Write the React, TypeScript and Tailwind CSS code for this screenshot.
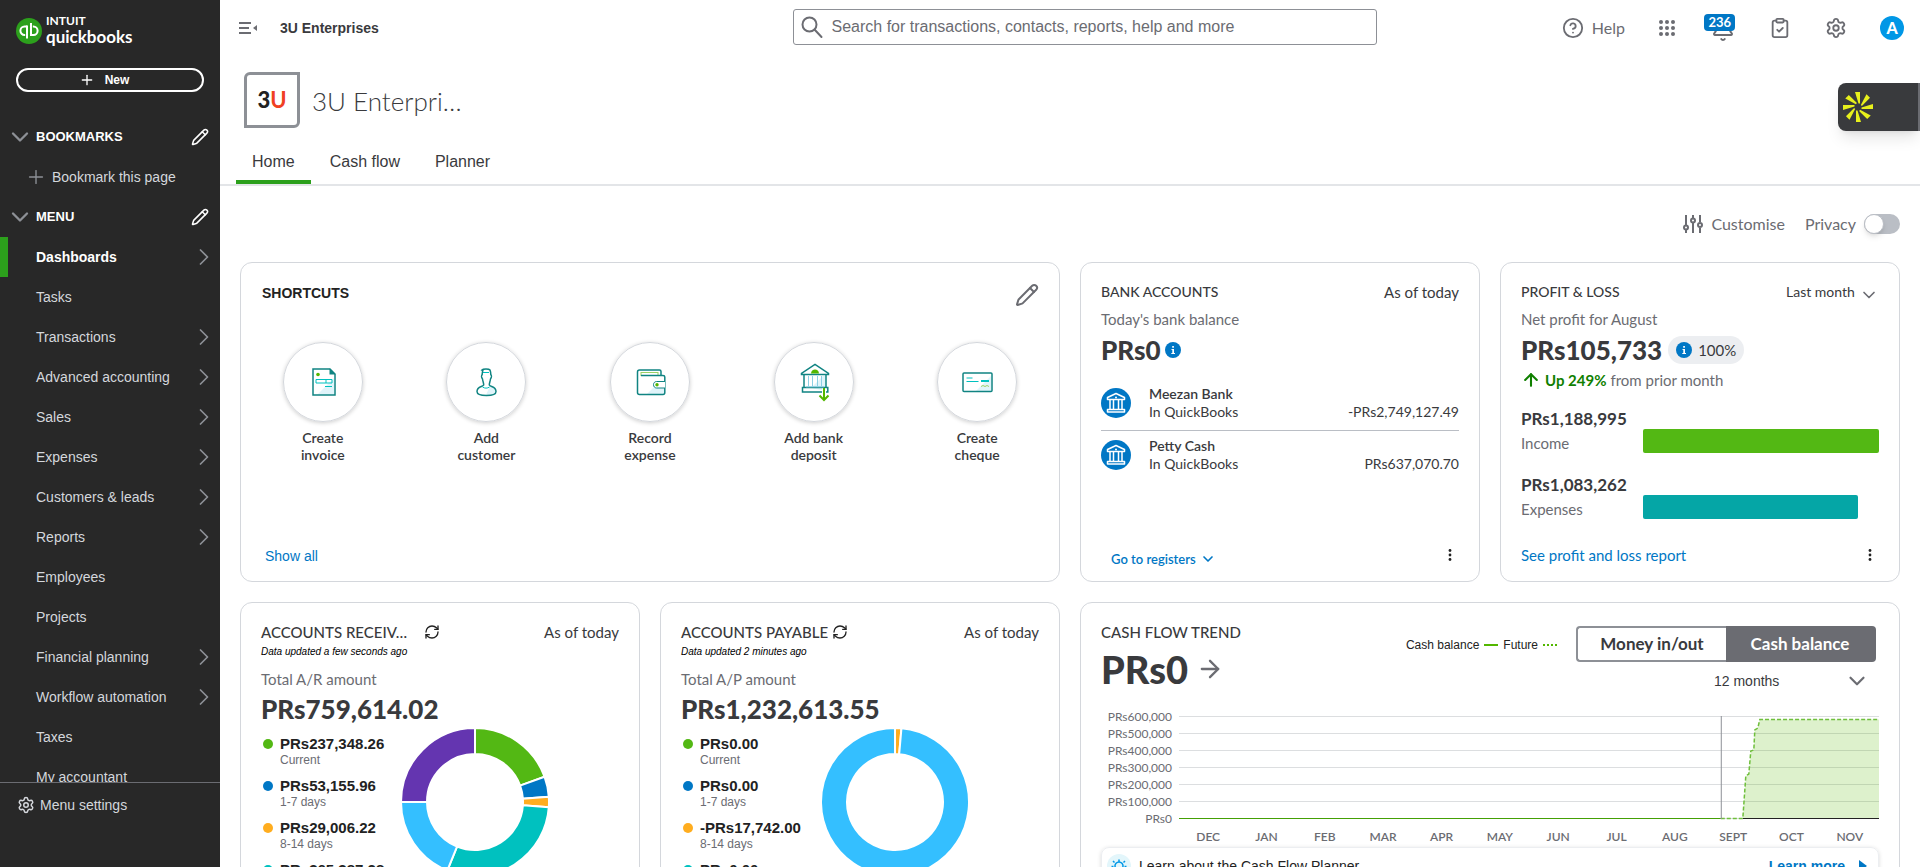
import { useState } from "react";
import clsx from "clsx";
import {
  ArrowRight,
  ArrowUp,
  Bell,
  ChevronDown,
  ChevronRight,
  CircleHelp,
  ClipboardCheck,
  Pencil,
  Plus,
  RefreshCw,
  Settings,
} from "lucide-react";

const menu = [
  { label: "Dashboards", sub: true, active: true },
  { label: "Tasks" },
  { label: "Transactions", sub: true },
  { label: "Advanced accounting", sub: true },
  { label: "Sales", sub: true },
  { label: "Expenses", sub: true },
  { label: "Customers & leads", sub: true },
  { label: "Reports", sub: true },
  { label: "Employees" },
  { label: "Projects" },
  { label: "Financial planning", sub: true },
  { label: "Workflow automation", sub: true },
  { label: "Taxes" },
  { label: "My accountant" },
];

const months = ["DEC", "JAN", "FEB", "MAR", "APR", "MAY", "JUN", "JUL", "AUG", "SEPT", "OCT", "NOV"];

const ticks = ["PRs600,000", "PRs500,000", "PRs400,000", "PRs300,000", "PRs200,000", "PRs100,000", "PRs0"];

type Aging = { amount: string; label: string; color: string };
type Slice = { from: number; to: number; color: string };

const receivable: Aging[] = [
  { amount: "PRs237,348.26", label: "Current", color: "bg-[#53b814]" },
  { amount: "PRs53,155.96", label: "1-7 days", color: "bg-[#0077c5]" },
  { amount: "PRs29,006.22", label: "8-14 days", color: "bg-[#ffad1f]" },
  { amount: "PRs365,387.28", label: "15-21 days", color: "bg-[#00c1bf]" },
];

const payable: Aging[] = [
  { amount: "PRs0.00", label: "Current", color: "bg-[#53b814]" },
  { amount: "PRs0.00", label: "1-7 days", color: "bg-[#0077c5]" },
  { amount: "-PRs17,742.00", label: "8-14 days", color: "bg-[#ffad1f]" },
  { amount: "PRs0.00", label: "15-21 days", color: "bg-[#00c1bf]" },
];

const receivableSlices: Slice[] = [
  { from: 0, to: 70, color: "#53b814" },
  { from: 70, to: 86, color: "#0077c5" },
  { from: 86, to: 94, color: "#ffad1f" },
  { from: 94, to: 202, color: "#00c1bf" },
  { from: 202, to: 270, color: "#34bfff" },
  { from: 270, to: 360, color: "#6435b0" },
];

const payableSlices: Slice[] = [
  { from: 0, to: 5, color: "#ffad1f" },
  { from: 5, to: 360, color: "#34bfff" },
];

function QbMark() {
  return (
    <svg className="size-[26px]" viewBox="0 0 26 26" fill="none">
      <circle cx="13" cy="13" r="13" fill="#2ca01c" />
      <g stroke="#fff" strokeWidth="2">
        <path d="M11 8.5H8.6a4.2 4.2 0 0 0 0 8.4h.6" />
        <path d="M11 7.5v13" />
        <path d="M15 17h2.4a4.2 4.2 0 0 0 0-8.4h-.6" />
        <path d="M15 5v13" />
      </g>
    </svg>
  );
}

function InvoiceIcon() {
  return (
    <svg className="size-10" viewBox="0 0 40 40" fill="none">
      <path d="M14 33 31 16v17z" fill="#e0f4fa" />
      <path d="M10 7h17l5 5v21H10z" stroke="#108482" strokeWidth="1.5" />
      <path d="M26.500 6.500v6h6z" fill="#108482" />
      <circle cx="15" cy="12.500" r="1.800" fill="#53b700" />
      <path d="M13 17.500h16v3.500H13zM23 17.500V21M22 24.500h7" stroke="#00c1bf" />
    </svg>
  );
}

function CustomerIcon() {
  return (
    <svg className="size-10" viewBox="0 0 40 40" fill="none">
      <path d="M20 33c6 0 9-1.500 9-4s-2-4-5-5z" fill="#e0f4fa" />
      <path
        d="M16 8c1-1.500 7-1.500 8 0 .6 1.500.8 3 .8 4.500.8.800 1 3-.3 4.500-.4 2.500-1.200 4-1.200 6 1 2 6.700 1.500 6.700 6.500 0 2.500-4 4-9.500 4s-9.500-1.500-9.500-4c0-5 5.700-4.500 6.700-6.500 0-2-.8-3.500-1.200-6-1.300-1.500-1.100-3.700-.3-4.500 0-1.500.2-3 .8-4.500z"
        stroke="#108482"
        strokeWidth="1.500"
      />
      <path d="M17 10.500h6M16.500 25c2 1.500 5 1.500 7 0" stroke="#00c1bf" />
    </svg>
  );
}

function WalletIcon() {
  return (
    <svg className="size-10" viewBox="0 0 40 40" fill="none">
      <path d="M17 32l7-7h10v7z" fill="#e0f4fa" />
      <rect x="11" y="10.500" width="17" height="3" stroke="#9bd165" />
      <path
        d="M31 13V9.500c0-.8-.6-1.500-1.500-1.500h-20C8.200 8 7.500 8.700 7.500 10v20.500c0 1.200.8 2 2 2H33c1.200 0 1.800-.8 1.800-2V15c0-1.200-.6-1.600-1.800-1.600H11"
        stroke="#108482"
        strokeWidth="1.500"
      />
      <path d="M35 19.500h-8.500c-1.800 0-3 1.500-3 3.200s1.200 3.300 3 3.300H35" stroke="#108482" fill="#fff" />
      <circle cx="27" cy="22.800" r="1.700" fill="#53b700" />
    </svg>
  );
}

function DepositIcon() {
  return (
    <svg className="size-10 overflow-visible" viewBox="0 0 40 40" fill="none">
      <path d="M17 26l12-12h3v15z" fill="#e0f4fa" />
      <path d="M7.500 12.500v-1L21 2.500l13.500 9v1zM10 13v12M32 13v12M8.500 30v-4.500h25.300V30z" stroke="#108482" strokeWidth="1.500" />
      <path d="M14.500 14v10.500M18.500 14v10.500M23.500 14v10.500M27.500 14v10.500M12 24.800h18" stroke="#8ccfe4" />
      <path d="M17 11.500c0-5.300 8-5.300 8 0z" fill="#53b700" />
      <path d="M30 26.500v12M25.500 34l4.500 4.500 4.500-4.500" stroke="#fff" strokeWidth="4" />
      <path d="M30 26v12M25.500 33.500l4.500 4.500 4.500-4.500" stroke="#53b700" strokeWidth="2" />
    </svg>
  );
}

function ChequeIcon() {
  return (
    <svg className="size-10" viewBox="0 0 40 40" fill="none">
      <path d="M19 29l15-15v15z" fill="#e0f4fa" />
      <rect x="6" y="11" width="29" height="18.500" rx="1" stroke="#108482" strokeWidth="1.500" />
      <path d="M9.500 16h6M9.500 19.500h12" stroke="#00c1bf" />
      <path d="M24 19h8" stroke="#00c1bf" strokeWidth="2" />
      <path d="M24 24.500l2-1 2 1 2-1 2 1" stroke="#9bd165" />
    </svg>
  );
}

const shortcuts = [
  { label: "Create invoice", icon: <InvoiceIcon /> },
  { label: "Add customer", icon: <CustomerIcon /> },
  { label: "Record expense", icon: <WalletIcon /> },
  { label: "Add bank deposit", icon: <DepositIcon /> },
  { label: "Create cheque", icon: <ChequeIcon /> },
];

function BankIcon() {
  return (
    <svg className="size-[30px] shrink-0" viewBox="0 0 30 30" fill="none">
      <circle cx="15" cy="15" r="15" fill="#0077c5" />
      <path
        d="M6.500 11.500v-2L15 5.500l8.500 4v2zM9 12v9M12.500 12v9M17.500 12v9M21 12v9M6.500 21.500h17v2.500h-17z"
        stroke="#fff"
        strokeWidth="1.500"
        strokeLinejoin="round"
      />
      <circle cx="15" cy="9.500" r="1" fill="#fff" />
    </svg>
  );
}

function InfoIcon() {
  return (
    <svg className="size-4" viewBox="0 0 16 16">
      <circle cx="8" cy="8" r="8" fill="#0077c5" />
      <path d="M6.500 7H9v4h1v1H6.300v-1h1V8h-.8zM7.200 4h1.700v1.700H7.200z" fill="#fff" />
    </svg>
  );
}

function SearchIcon() {
  return (
    <svg className="size-6" viewBox="0 0 24 24" fill="none" stroke="#6b6c72" strokeWidth="2">
      <circle cx="9.500" cy="9.500" r="7" />
      <path d="M14.500 14.500 21.500 22" strokeLinecap="round" />
    </svg>
  );
}

function SlidersIcon() {
  return (
    <svg className="size-5" viewBox="0 0 20 20" fill="none" stroke="#6b6c72" strokeWidth="2">
      <path d="M3 1v10M3 16v3M10 1v3M10 9v10M17 1v7M17 14v5" />
      <circle cx="3" cy="13.500" r="2" />
      <circle cx="10" cy="6.500" r="2" />
      <circle cx="17" cy="11" r="2" />
    </svg>
  );
}

function KebabButton({ label }: { label: string }) {
  return (
    <button aria-label={label} className="flex h-5 w-[18px] items-center justify-center">
      <svg className="h-3 w-1" viewBox="0 0 4 12" fill="#222">
        <circle cx="2" cy="1.500" r="1.400" />
        <circle cx="2" cy="6" r="1.400" />
        <circle cx="2" cy="10.500" r="1.400" />
      </svg>
    </button>
  );
}

function point(angle: number, r: number) {
  const rad = ((angle - 90) * Math.PI) / 180;
  return `${74 + r * Math.cos(rad)} ${74 + r * Math.sin(rad)}`;
}

function Donut({ slices }: { slices: Slice[] }) {
  return (
    <svg className="mt-px size-[148px] shrink-0" viewBox="0 0 148 148">
      {slices.map(({ from, to, color }) => {
        const large = to - from > 180 ? 1 : 0;
        return (
          <path
            key={from}
            d={`M${point(from, 74)}A74 74 0 ${large} 1 ${point(to, 74)}L${point(to, 48)}A48 48 0 ${large} 0 ${point(from, 48)}Z`}
            fill={color}
            stroke="#fff"
            strokeWidth="2"
          />
        );
      })}
    </svg>
  );
}

function Card({ className, children }: { className?: string; children: React.ReactNode }) {
  return (
    <section className={clsx("flex flex-col rounded-xl border border-[#d4d7dc] bg-white px-5 pt-5", className)}>
      {children}
    </section>
  );
}

function Sidebar() {
  return (
    <aside className="flex w-[220px] shrink-0 flex-col bg-[#282828] font-['Liberation_Sans',sans-serif] text-sm text-[#d4d7dc]">
      <div className="flex min-h-0 flex-1 flex-col overflow-hidden">
        <a href="#" className="flex h-[52px] shrink-0 items-center gap-1 pt-2.5 pl-4 font-['Lato',sans-serif] text-white">
          <QbMark />
          <span className="flex flex-col pb-1">
            <span className="text-xs leading-[14px] font-bold">INTUIT</span>
            <span className="text-[17px] leading-[17px] font-bold">quickbooks</span>
          </span>
        </a>
        <button className="mx-4 mt-4 flex h-6 shrink-0 items-center justify-center gap-2.5 rounded-full border-2 border-white pr-3 text-xs font-bold text-white">
          <Plus className="size-4" />
          New
        </button>
        <div className="mt-[25px] flex h-10 shrink-0 items-center pr-[11px] pl-1.5">
          <ChevronDown className="size-7 text-[#8d9096]" strokeWidth={2} />
          <h2 className="flex-1 pl-0.5 text-[13px] font-bold text-white">BOOKMARKS</h2>
          <button aria-label="Edit bookmarks">
            <Pencil className="size-[18px] text-white" />
          </button>
        </div>
        <button className="flex h-10 shrink-0 items-center gap-[5px] pl-[25px] text-left">
          <Plus className="size-[22px] text-[#8d9096]" strokeWidth={1.5} />
          Bookmark this page
        </button>
        <div className="flex h-10 shrink-0 items-center pr-[11px] pl-1.5">
          <ChevronDown className="size-7 text-[#8d9096]" strokeWidth={2} />
          <h2 className="flex-1 pl-0.5 text-[13px] font-bold text-white">MENU</h2>
          <button aria-label="Edit menu">
            <Pencil className="size-[18px] text-white" />
          </button>
        </div>
        <nav>
          {menu.map(({ label, sub, active }) => (
            <a
              key={label}
              href="#"
              className={clsx(
                "flex h-10 items-center justify-between border-l-8 pr-0.5 pl-7",
                active ? "border-[#2ca01c] font-bold text-white" : "border-transparent"
              )}
            >
              {label}
              {sub && <ChevronRight className="size-7 text-[#8d9096]" strokeWidth={1.5} />}
            </a>
          ))}
        </nav>
      </div>
      <div className="h-[85px] shrink-0 border-t border-[#6b6c72]">
        <button className="flex h-11 items-center gap-[5px] pl-[17px]">
          <Settings className="size-[18px]" />
          Menu settings
        </button>
      </div>
    </aside>
  );
}

function Header() {
  return (
    <header className="flex h-14 shrink-0 items-start justify-between pr-4 pl-[19px]">
      <div className="flex h-14 flex-1 items-center gap-[23px] font-['Liberation_Sans',sans-serif]">
        <button aria-label="Collapse menu">
          <svg className="h-3 w-[18px]" viewBox="0 0 18 12" fill="none">
            <path d="M0 1h12M0 6h10M0 11h12" stroke="#6b6c72" strokeWidth="2" />
            <path d="M18 3v6l-4-3z" fill="#6b6c72" />
          </svg>
        </button>
        <span className="text-sm font-bold text-[#393a3d]">3U Enterprises</span>
      </div>
      <label className="mt-[9px] ml-[26px] flex h-9 w-[584px] items-center gap-2 rounded-[3px] border border-[#8d9096] pl-1.5 text-[#6b6c72]">
        <SearchIcon />
        <input
          type="search"
          aria-label="Search"
          placeholder="Search for transactions, contacts, reports, help and more"
          className="flex-1 font-['Liberation_Sans',sans-serif] text-base outline-none placeholder:text-[#6b6c72]"
        />
      </label>
      <div className="flex h-14 flex-1 items-center justify-end text-[#6b6c72]">
        <button className="mr-[34px] flex items-center gap-2 font-['Lato',sans-serif] text-base">
          <CircleHelp className="size-[22px]" />
          Help
        </button>
        <button aria-label="Apps" className="mr-9">
          <svg className="size-4" viewBox="0 0 16 16" fill="#6b6c72">
            {[2, 8, 14].map((y) => [2, 8, 14].map((x) => <circle key={`${x}-${y}`} cx={x} cy={y} r="2" />))}
          </svg>
        </button>
        <button aria-label="Notifications" className="relative mt-1 mr-[34px]">
          <Bell className="size-6" />
          <span className="absolute -top-1 right-0 rounded-sm bg-[#0077c5] px-1 font-['Lato',sans-serif] text-[13px] leading-[17px] font-bold text-white">
            236
          </span>
        </button>
        <button aria-label="Tasks" className="mr-[34px]">
          <ClipboardCheck className="size-[22px]" />
        </button>
        <button aria-label="Settings" className="mr-[33px]">
          <Settings className="size-[22px]" />
        </button>
        <button
          aria-label="Account"
          className="size-6 rounded-full bg-[#0097e6] font-['Lato',sans-serif] text-base leading-6 font-black text-white"
        >
          A
        </button>
      </div>
    </header>
  );
}

function CompanyBar() {
  return (
    <div className="border-b-2 border-[#e3e5e8]">
      <div className="flex items-center gap-3 pt-4 pl-6">
        <div className="flex size-14 items-center justify-center rounded-tl-md rounded-br-md border-[3px] border-[#8d9096] pb-0.5 text-[22px] font-black">
          <span className="text-[#222]">3</span>
          <span className="font-bold text-[#f04023]">U</span>
        </div>
        <h1 className="pt-0.5 text-[26px] font-light text-[#393a3d]">3U Enterpri…</h1>
      </div>
      <nav className="mt-2.5 flex gap-[3px] pl-4 font-['Liberation_Sans',sans-serif] text-base text-[#393a3d]">
        {["Home", "Cash flow", "Planner"].map((tab, i) => (
          <a
            key={tab}
            href="#"
            className={clsx(
              "flex h-[46px] items-center border-b-4 px-4 pt-1.5",
              i === 0 ? "border-b-[#2ca01c]" : "border-b-transparent"
            )}
          >
            {tab}
          </a>
        ))}
      </nav>
    </div>
  );
}

function Shortcuts() {
  return (
    <section className="col-span-2 flex h-80 flex-col rounded-xl border border-[#d4d7dc] bg-white">
      <div className="flex items-start justify-between pt-5 pr-5 pl-[21px]">
        <h2 className="font-['Liberation_Sans',sans-serif] text-sm leading-5 font-bold text-[#222]">SHORTCUTS</h2>
        <button aria-label="Edit shortcuts">
          <Pencil className="size-6 text-[#6b6c72]" />
        </button>
      </div>
      <div className="mt-[35px] grid grid-cols-5">
        {shortcuts.map(({ label, icon }) => (
          <button key={label} className="flex flex-col items-center">
            <span className="flex size-20 items-center justify-center rounded-full border border-[#d4d7dc] shadow-[0_1px_4px_rgba(0,0,0,0.2)]">
              {icon}
            </span>
            <span className="mt-[7px] w-20 text-sm leading-[17px] font-semibold text-[#393a3d]">{label}</span>
          </button>
        ))}
      </div>
      <a href="#" className="mt-auto mb-[15px] ml-6 self-start font-['Liberation_Sans',sans-serif] text-sm leading-5 text-[#0077c5]">
        Show all
      </a>
    </section>
  );
}

function BankAccounts() {
  const accounts = [
    { name: "Meezan Bank", balance: "-PRs2,749,127.49" },
    { name: "Petty Cash", balance: "PRs637,070.70" },
  ];

  return (
    <Card className="h-80">
      <div className="flex justify-between text-[#393a3d]">
        <h2 className="text-sm leading-[18px] font-medium">BANK ACCOUNTS</h2>
        <span className="text-[15px] leading-[18px]">As of today</span>
      </div>
      <p className="mt-2 text-[15px] leading-5 text-[#6b6c72]">Today's bank balance</p>
      <p className="mt-1.5 flex h-[30px] items-center gap-1 text-[26px] font-black text-[#393a3d]">
        PRs0 <InfoIcon />
      </p>
      <ul className="mt-3.5">
        {accounts.map(({ name, balance }) => (
          <li
            key={name}
            className="flex items-center border-b border-[#babec5] pt-1.5 pb-[9px] text-sm leading-[18px] text-[#393a3d] last:border-0"
          >
            <BankIcon />
            <div className="flex-1 pl-[18px]">
              <p className="font-semibold">{name}</p>
              <p>In QuickBooks</p>
            </div>
            <span className="self-end">{balance}</span>
          </li>
        ))}
      </ul>
      <div className="mt-auto flex items-start justify-between pb-3 pl-2.5">
        <button className="flex items-center gap-1 pt-1 text-[13px] leading-5 font-semibold text-[#0077c5]">
          Go to registers
          <ChevronDown className="size-4" strokeWidth={2.5} />
        </button>
        <KebabButton label="Bank account options" />
      </div>
    </Card>
  );
}

function ProfitLoss() {
  const rows = [
    { amount: "PRs1,188,995", label: "Income", value: 1188995, color: "bg-[#53b814]" },
    { amount: "PRs1,083,262", label: "Expenses", value: 1083262, color: "bg-[#05a6a6]" },
  ];

  return (
    <Card className="h-80">
      <div className="flex h-[18px] justify-between text-sm leading-[18px] text-[#393a3d]">
        <h2 className="font-medium">PROFIT &amp; LOSS</h2>
        <div className="flex gap-1">
          <select aria-label="Period" className="h-[18px] appearance-none leading-[18px]">
            <option>Last month</option>
          </select>
          <ChevronDown className="mt-0.5 size-5 text-[#6b6c72]" />
        </div>
      </div>
      <p className="mt-2 text-[15px] leading-5 text-[#6b6c72]">Net profit for August</p>
      <div className="mt-1.5 flex h-[30px] items-center gap-1.5">
        <span className="text-[26px] font-black text-[#393a3d]">PRs105,733</span>
        <span className="flex h-7 items-center gap-1.5 rounded-full bg-[#eceef1] px-2 text-[15px] text-[#393a3d]">
          <InfoIcon />
          100%
        </span>
      </div>
      <p className="mt-1 flex items-center text-[15px] leading-[22px] text-[#6b6c72]">
        <ArrowUp className="mr-1 size-5 text-[#108000]" strokeWidth={2.5} />
        <span className="mr-1 font-bold text-[#108000]">Up 249%</span> from prior month
      </p>
      <div className="mt-4 flex flex-col gap-[18px]">
        {rows.map(({ amount, label, value, color }) => (
          <div key={label} className="flex items-end">
            <div className="w-[122px]">
              <p className="text-[17px] leading-6 font-bold text-[#393a3d]">{amount}</p>
              <p className="text-[15px] leading-6 text-[#6b6c72]">{label}</p>
            </div>
            <div className="mb-0.5 flex-1">
              <div className={clsx("h-6 rounded-xs", color)} style={{ width: `${(value / 1188995) * 100}%` }} />
            </div>
          </div>
        ))}
      </div>
      <div className="mt-auto flex items-center justify-between pb-4">
        <a href="#" className="text-[15px] leading-5 text-[#0077c5]">
          See profit and loss report
        </a>
        <KebabButton label="Profit and loss options" />
      </div>
    </Card>
  );
}

type AgingCardProps = {
  title: string;
  titleClassName?: string;
  updated: string;
  caption: string;
  total: string;
  rows: Aging[];
  slices: Slice[];
};

function AgingCard({ title, titleClassName, updated, caption, total, rows, slices }: AgingCardProps) {
  return (
    <Card className="pb-5">
      <div className="flex items-center justify-between text-[15px] leading-[18px] text-[#393a3d]">
        <div className="flex items-center gap-1">
          <h2 className={clsx("font-medium", titleClassName)}>{title}</h2>
          <button aria-label="Refresh">
            <RefreshCw className="size-4 text-[#222]" />
          </button>
        </div>
        <span>As of today</span>
      </div>
      <p className="font-['Liberation_Sans',sans-serif] text-[10px] leading-[22px] text-black italic">{updated}</p>
      <p className="mt-1.5 text-[15px] leading-5 text-[#6b6c72]">{caption}</p>
      <p className="mt-1 mb-0.5 text-[26px] leading-8 font-black text-[#393a3d]">{total}</p>
      <div className="flex items-start">
        <ul className="flex w-[140px] shrink-0 flex-col gap-2.5 pt-2 pl-0.5 font-['Liberation_Sans',sans-serif]">
          {rows.map(({ amount, label, color }) => (
            <li key={label} className="flex gap-[7px]">
              <span className={clsx("mt-1 size-2.5 shrink-0 rounded-full", color)} />
              <div>
                <p className="text-[15px] leading-[18px] font-bold text-[#222]">{amount}</p>
                <p className="text-xs leading-[14px] text-[#6b6c72]">{label}</p>
              </div>
            </li>
          ))}
        </ul>
        <Donut slices={slices} />
      </div>
    </Card>
  );
}

function CashFlowTrend() {
  const [view, setView] = useState("Cash balance");

  return (
    <Card className="col-span-2 pb-5">
      <div className="flex items-start justify-between">
        <div>
          <h2 className="text-[15px] leading-[18px] font-medium text-[#393a3d]">CASH FLOW TREND</h2>
          <p className="mt-2 flex items-center gap-2 text-[38px] leading-10 font-black text-[#393a3d]">
            PRs0
            <ArrowRight className="size-7 text-[#6b6c72]" />
          </p>
        </div>
        <div className="flex items-start pt-[3px] pr-[3px]">
          <div className="mr-[19px] flex h-9 items-center gap-[5px] pt-0.5 font-['Liberation_Sans',sans-serif] text-xs text-[#222]">
            Cash balance
            <span className="w-3.5 border-t-2 border-[#53b700]" />
            Future
            <span className="w-3.5 border-t-2 border-dotted border-[#53b700]" />
          </div>
          <div>
            <div className="grid h-9 w-[300px] grid-cols-2 text-[17px] font-bold">
              {["Money in/out", "Cash balance"].map((name) => (
                <button
                  key={name}
                  onClick={() => setView(name)}
                  className={clsx(
                    "border-2 first:rounded-l-sm first:border-r-0 last:rounded-r-sm last:border-l-0",
                    view === name ? "border-[#6b6c72] bg-[#6b6c72] text-white" : "border-[#8d9096] bg-white text-[#393a3d]"
                  )}
                >
                  {name}
                </button>
              ))}
            </div>
            <div className="mt-2 mr-1.5 ml-[138px] flex h-[22px] items-center justify-between font-['Liberation_Sans',sans-serif] text-sm text-[#393a3d]">
              <select aria-label="Range" className="appearance-none leading-[22px]">
                <option>12 months</option>
              </select>
              <ChevronDown className="size-[26px] text-[#6b6c72]" />
            </div>
          </div>
        </div>
      </div>

      <div className="mt-4 flex text-xs text-[#6b6c72]">
        <div className="w-[71px] shrink-0 text-right">
          {ticks.map((tick) => (
            <p key={tick} className="leading-[17px]">
              {tick}
            </p>
          ))}
        </div>
        <div className="ml-[7px] flex-1">
          <svg className="h-[119px] w-full" viewBox="0 0 699 119" preserveAspectRatio="none" fill="none">
            {ticks.map((tick, i) => (
              <path key={tick} d={`M0 ${8.5 + i * 17}H699`} stroke="#dcdee0" />
            ))}
            <path d="M563 110.500 566 68l3-2 2-23 3-1 1-20 3-2 2-8.500h119v99z" fill="#53b700" fillOpacity=".2" />
            <path d="M563 110.500H699" stroke="#222" />
            <path d="M541 110.500h22L566 68l3-2 2-23 3-1 1-20 3-2 2-8.500h119" stroke="#6fbf3c" strokeWidth="1.500" strokeDasharray="4 2" />
            <path d="M0 110.500h541" stroke="#44a005" />
            <path d="M541.500 8v103" stroke="#8d9096" />
          </svg>
          <div className="grid grid-cols-12 text-center leading-5 font-semibold">
            {months.map((month) => (
              <span key={month}>{month}</span>
            ))}
          </div>
        </div>
      </div>

      <div className="flex items-center gap-2 rounded-lg border border-[#eceef1] px-[5px] py-1.5 font-['Liberation_Sans',sans-serif] text-sm text-[#222] shadow-[0_1px_4px_rgba(0,0,0,0.15)]">
        <svg className="size-6" viewBox="0 0 24 24" fill="none">
          <circle cx="12" cy="12" r="12" fill="#e3f6fb" />
          <path
            d="M9.500 17v-2a4 4 0 1 1 5 0v2zM12 5.500v2M6 7l1.500 1.500M18 7l-1.500 1.500M4.500 12.500h2M17.500 12.500h2"
            stroke="#0097e6"
            strokeWidth="1.500"
          />
        </svg>
        <span className="flex-1">Learn about the Cash Flow Planner</span>
        <a href="#" className="flex items-center gap-3.5 pr-1.5 font-bold text-[#0077c5]">
          Learn more
          <svg className="h-3 w-2" viewBox="0 0 8 12" fill="#0077c5">
            <path d="M0 0l8 6-8 6z" />
          </svg>
        </a>
      </div>
    </Card>
  );
}

function AssistantTab() {
  return (
    <button
      aria-label="Open assistant"
      className="absolute top-[83px] right-0 flex h-12 w-[82px] items-center rounded-l-lg border-r-2 border-[#6b6c72] bg-[#393a3d] pl-[5px] shadow-lg"
    >
      <svg className="size-[30px]" viewBox="-15 -15 30 30" fill="#e7f01c">
        {[0, 45, 90, 135, 180, 225, 270, 315].map((turn) => (
          <path key={turn} d="M-3-15H2V-3.500H.5z" transform={`rotate(${turn})`} />
        ))}
      </svg>
    </button>
  );
}

export default function App() {
  return (
    <div className="flex h-screen overflow-hidden bg-white font-['Lato',sans-serif]">
      <Sidebar />
      <div className="relative min-w-0 flex-1 overflow-hidden">
        <Header />
        <CompanyBar />
        <AssistantTab />
        <main className="px-5 pb-5">
          <div className="flex h-[76px] items-center justify-end text-base text-[#6b6c72]">
            <button className="mr-5 flex items-center gap-2">
              <SlidersIcon />
              Customise
            </button>
            <label className="flex items-center gap-2">
              Privacy
              <input
                type="checkbox"
                className="h-5 w-9 appearance-none rounded-full bg-[#babec5] before:block before:size-5 before:rounded-full before:border before:border-[#babec5] before:bg-white before:shadow-md checked:bg-[#2ca01c] checked:before:translate-x-4"
              />
            </label>
          </div>
          <div className="grid grid-cols-4 gap-5">
            <Shortcuts />
            <BankAccounts />
            <ProfitLoss />
            <AgingCard
              title="ACCOUNTS RECEIV…"
              titleClassName="min-w-[159px]"
              updated="Data updated a few seconds ago"
              caption="Total A/R amount"
              total="PRs759,614.02"
              rows={receivable}
              slices={receivableSlices}
            />
            <AgingCard
              title="ACCOUNTS PAYABLE"
              updated="Data updated 2 minutes ago"
              caption="Total A/P amount"
              total="PRs1,232,613.55"
              rows={payable}
              slices={payableSlices}
            />
            <CashFlowTrend />
          </div>
        </main>
      </div>
    </div>
  );
}
